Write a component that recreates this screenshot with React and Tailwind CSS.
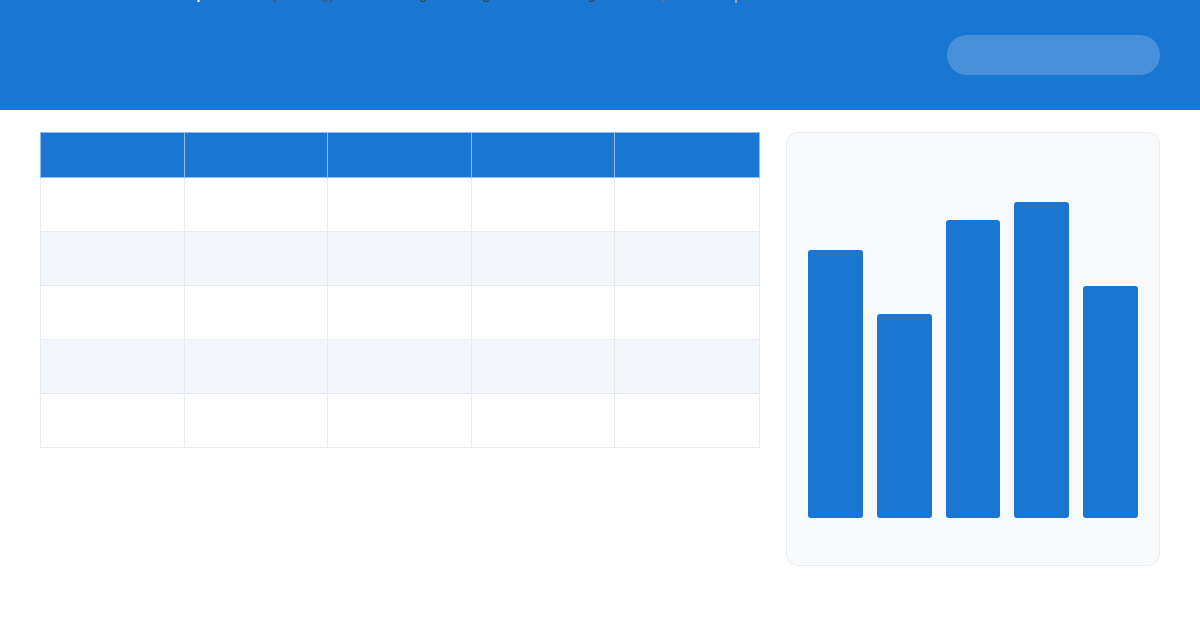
import React from "react";

const rows = [0, 1, 2, 3, 4];
const cols = [0, 1, 2, 3, 4];
const bars = [268, 204, 298, 316, 232];

export default function App() {
  return (
    <div className="w-[1200px] h-[630px] bg-white overflow-hidden" style={{ fontFamily: '"Liberation Sans", Arial, sans-serif' }}>
      <header className="h-[110px] bg-[#1976d2] flex flex-col">
        <div className="flex items-start -mt-[13px] h-[14px] text-[14px] leading-[14px] pl-[170px]">
          <span className="text-white font-bold">Shop</span>
          <span className="ml-[44px] text-[#4b5563]">Daily Strategy</span>
          <span className="ml-[48px] text-[#374151]">Pricing</span>
          <span className="ml-[26px] text-[#374151]">Billing</span>
          <span className="ml-[62px] text-[#374151]">Settings</span>
          <span className="ml-[20px] text-[#6b7280]">Gallery</span>
          <span className="ml-[68px] w-[2px] h-[16px] bg-[#9ca3af]"></span>
        </div>
        <div className="flex flex-1 items-center justify-end pr-[40px] pb-[1px]">
          <div className="w-[213px] h-[40px] rounded-full bg-white/20"></div>
        </div>
      </header>
      <main className="flex gap-[26px] px-[40px] pt-[22px]">
        <div className="w-[720px] self-start">
          <div className="grid grid-cols-5 bg-[#1976d2] border border-[#8fbcec] h-[46px]">
            {cols.map((c) => (
              <div key={c} className={c < 4 ? "border-r border-[#8fbcec]" : ""}></div>
            ))}
          </div>
          {rows.map((r) => (
            <div
              key={r}
              className={`grid grid-cols-5 h-[54px] border-x border-b border-[#e6ebf2] ${r % 2 === 1 ? "bg-[#f3f6fa]" : "bg-white"}`}
            >
              {cols.map((c) => (
                <div key={c} className={c < 4 ? "border-r border-[#e6ebf2]" : ""}></div>
              ))}
            </div>
          ))}
        </div>
        <div className="flex-1 h-[434px] rounded-[12px] border border-[#e8edf3] bg-[#f8f9fb] flex items-end gap-[14px] px-[21px] pb-[47px]">
          {bars.map((h, i) => (
            <div key={i} className="flex-1 rounded-[3px] bg-[#1976d2]" style={{ height: h }}></div>
          ))}
        </div>
      </main>
    </div>
  );
}
